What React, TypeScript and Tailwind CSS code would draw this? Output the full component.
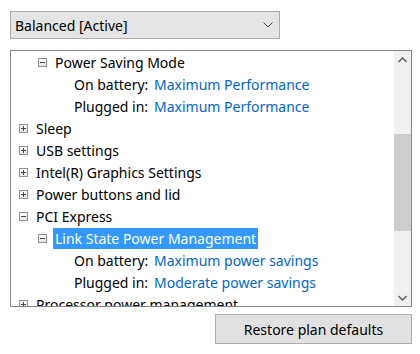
import React from "react";

const Box = ({ open }: { open: boolean }) => (
  <span className="relative inline-block w-[9px] h-[9px] border border-[#919191] bg-gradient-to-b from-white to-[#e6e6e6] shrink-0">
    <span className="absolute left-[1px] top-[3px] w-[5px] h-px bg-[#444]" />
    {!open && <span className="absolute left-[3px] top-[1px] w-px h-[5px] bg-[#444]" />}
  </span>
);

const Group = ({ level, open, label, selected }: { level: number; open: boolean; label: string; selected?: boolean }) => (
  <div className="h-[22px] flex items-center" style={{ paddingLeft: level === 0 ? 8 : 27 }}>
    <Box open={open} />
    <span
      className={
        "ml-[6px] px-[2px] h-[21px] flex items-center whitespace-nowrap " +
        (selected ? "bg-[#3399ff] text-white" : "text-black")
      }
    >
      {label}
    </span>
  </div>
);

const Setting = ({ label, value }: { label: string; value: string }) => (
  <div className="h-[22px] flex items-center pl-[63px] whitespace-nowrap">
    <span className="w-[80px] text-black">{label}</span>
    <span className="text-[#0066cc]">{value}</span>
  </div>
);

export default function App() {
  return (
    <div
      className="w-[420px] h-[354px] bg-white overflow-hidden text-[14px]"
      style={{ fontFamily: '"Noto Sans", sans-serif' }}
    >
      <div className="pt-[11px] pl-[10px]">
        <div className="w-[270px] h-[28px] border border-[#adadad] bg-[#e5e5e5] flex items-center justify-between pl-[4px] pr-[5px]">
          <span className="text-black">Balanced [Active]</span>
          <svg width="10" height="6" viewBox="0 0 10 6" className="mr-[1px]">
            <path d="M0.5 0.5 L5 5 L9.5 0.5" fill="none" stroke="#444" strokeWidth="1" />
          </svg>
        </div>
        <div className="mt-[11px] w-[402px] h-[257px] border border-[#828790] flex">
          <div className="flex-1 overflow-hidden">
            <Group level={1} open label="Power Saving Mode" />
            <Setting label="On battery:" value="Maximum Performance" />
            <Setting label="Plugged in:" value="Maximum Performance" />
            <Group level={0} open={false} label="Sleep" />
            <Group level={0} open={false} label="USB settings" />
            <Group level={0} open={false} label="Intel(R) Graphics Settings" />
            <Group level={0} open={false} label="Power buttons and lid" />
            <Group level={0} open label="PCI Express" />
            <Group level={1} open label="Link State Power Management" selected />
            <Setting label="On battery:" value="Maximum power savings" />
            <Setting label="Plugged in:" value="Moderate power savings" />
            <Group level={0} open={false} label="Processor power management" />
          </div>
          <div className="w-[17px] bg-[#f0f0f0] flex flex-col">
            <div className="h-[17px] flex items-center justify-center">
              <svg width="9" height="6" viewBox="0 0 9 6">
                <path d="M0.5 5 L4.5 1 L8.5 5" fill="none" stroke="#606060" strokeWidth="1.5" />
              </svg>
            </div>
            <div className="flex-1 px-0">
              <div className="mt-[66px] h-[97px] bg-[#cdcdcd]" />
            </div>
            <div className="h-[17px] flex items-center justify-center">
              <svg width="9" height="6" viewBox="0 0 9 6">
                <path d="M0.5 1 L4.5 5 L8.5 1" fill="none" stroke="#606060" strokeWidth="1.5" />
              </svg>
            </div>
          </div>
        </div>
        <div className="mt-[7px] ml-[205px] w-[197px] h-[30px] border border-[#adadad] bg-[#e1e1e1] flex items-center justify-center text-black">
          Restore plan defaults
        </div>
      </div>
    </div>
  );
}
